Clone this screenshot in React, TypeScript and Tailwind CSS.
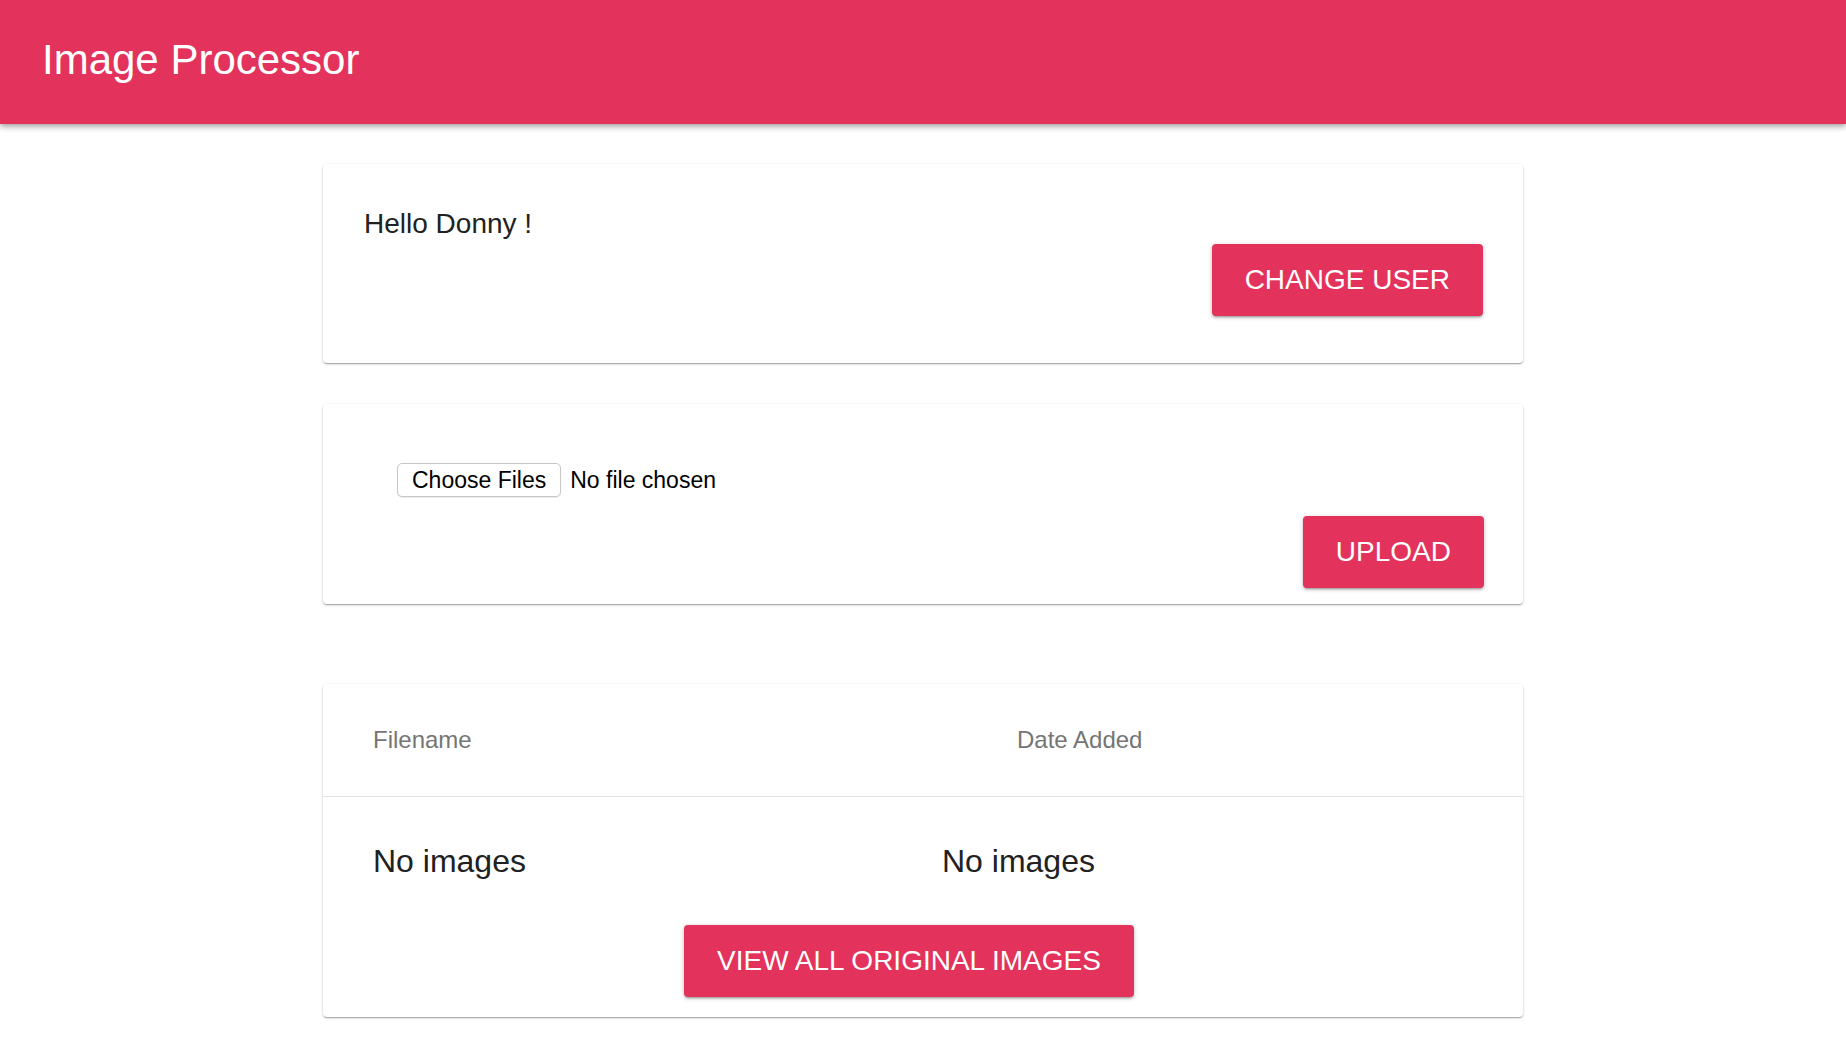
const btnShadow =
  "shadow-[0_1px_5px_0_rgba(0,0,0,0.2),0_2px_2px_0_rgba(0,0,0,0.14),0_3px_1px_-2px_rgba(0,0,0,0.12)]";
const cardShadow =
  "shadow-[0_1px_3px_0_rgba(0,0,0,0.2),0_1px_1px_0_rgba(0,0,0,0.14),0_2px_1px_-1px_rgba(0,0,0,0.12)]";

function PinkButton({ label }: { label: string }) {
  return (
    <button
      className={`h-[72px] rounded-[4px] bg-[#e3325b] px-[33px] text-[28px] leading-none text-white ${btnShadow}`}
    >
      {label}
    </button>
  );
}

export default function App() {
  return (
    <div className="min-h-screen bg-white font-['Liberation_Sans',Arial,sans-serif] text-[#212121]">
      <header className="relative z-10 flex h-[124px] items-center bg-[#e3325b] px-[42px] pb-[5px] shadow-[0_2px_4px_-1px_rgba(0,0,0,0.2),0_4px_5px_0_rgba(0,0,0,0.14),0_1px_10px_0_rgba(0,0,0,0.12)]">
        <h1 className="text-[42px] leading-none text-white">Image Processor</h1>
      </header>

      <main className="mx-auto w-[1200px] pt-[40px]">
        {/* user */}
        <div className={`flex flex-col rounded-[4px] bg-white pt-[44px] pb-[47px] pl-[41px] pr-[40px] ${cardShadow}`}>
          <p className="text-[28px] leading-[32px]">Hello Donny !</p>
          <div className="mt-[4px] flex justify-end">
            <PinkButton label="CHANGE USER" />
          </div>
        </div>

        {/* upload */}
        <div className={`mt-[41px] flex flex-col rounded-[4px] bg-white pt-[59px] pb-[16px] pr-[39px] ${cardShadow}`}>
          <div className="flex h-[34px] items-center pl-[74px] text-[23px] text-black">
            <span className="flex h-[34px] items-center rounded-[5px] border border-[#c6c6c6] bg-white px-[14px] shadow-[0_1px_1px_rgba(0,0,0,0.08)]">
              Choose Files
            </span>
            <span className="ml-[9px]">No file chosen</span>
          </div>
          <div className="mt-[19px] flex justify-end">
            <PinkButton label="UPLOAD" />
          </div>
        </div>

        {/* images */}
        <div className={`mt-[80px] rounded-[4px] bg-white pb-[20px] ${cardShadow}`}>
          <div className="flex h-[113px] items-center border-b border-[#e0e0e0] pl-[50px] pb-[1px] text-[24px] text-[#757575]">
            <span className="w-[644px]">Filename</span>
            <span>Date Added</span>
          </div>
          <div className="flex pl-[50px] pt-[42px] text-[32px] leading-[45px]">
            <span className="w-[569px]">No images</span>
            <span>No images</span>
          </div>
          <div className="mt-[41px] pl-[361px]">
            <PinkButton label="VIEW ALL ORIGINAL IMAGES" />
          </div>
        </div>
      </main>
    </div>
  );
}
